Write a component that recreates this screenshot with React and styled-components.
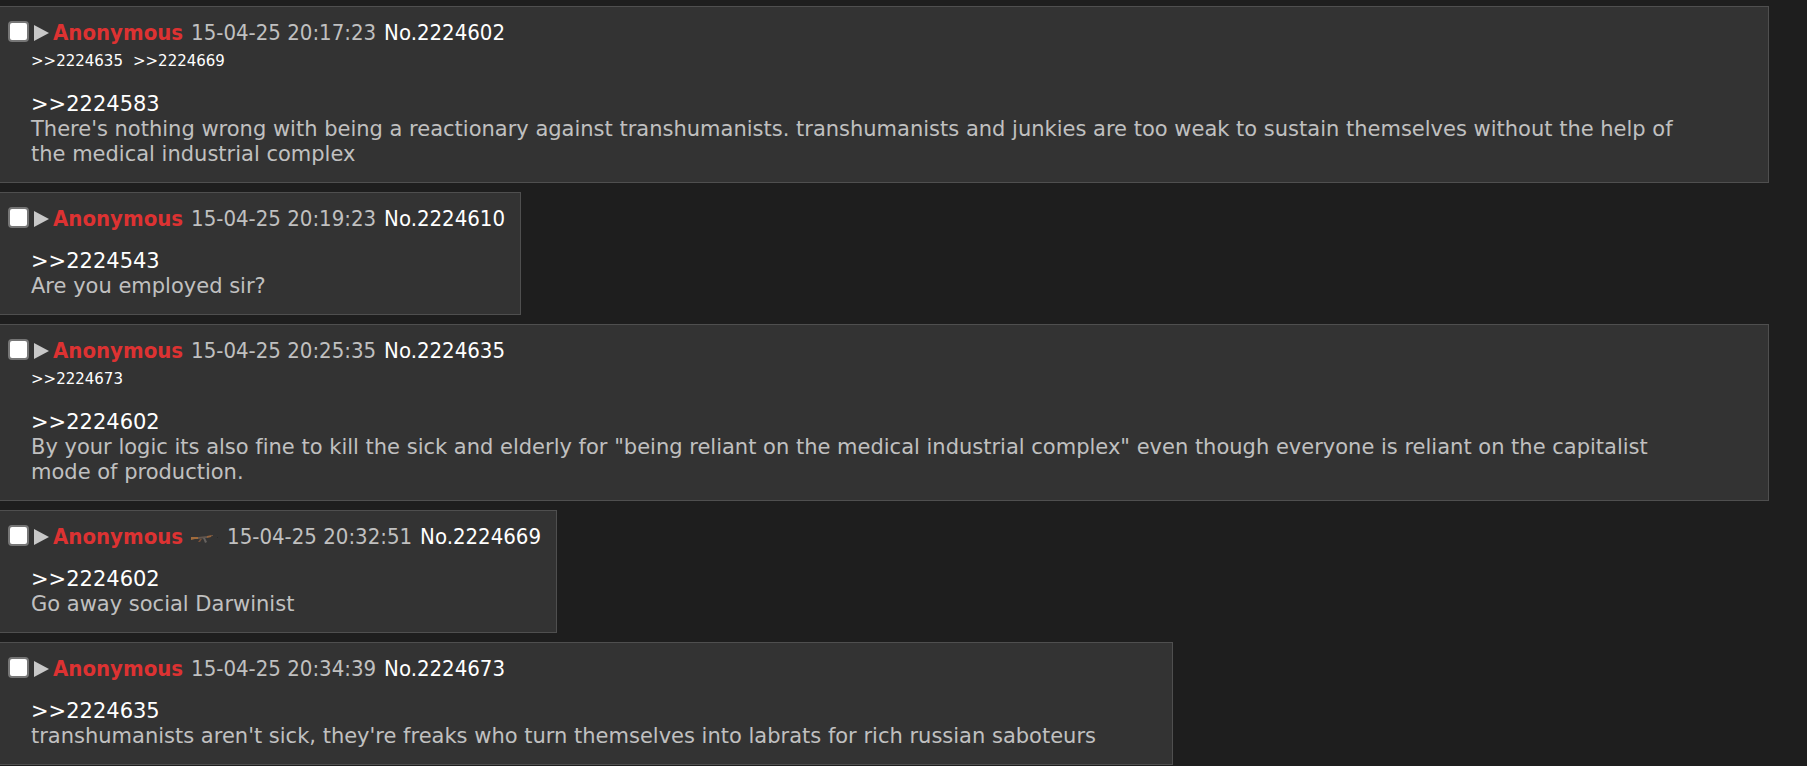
import styled, { createGlobalStyle } from 'styled-components';

const posts = [
    {
        id: '2224602',
        date: '15-04-25 20:17:23',
        replies: ['2224635', '2224669'],
        quote: '2224583',
        text: "There's nothing wrong with being a reactionary against transhumanists. transhumanists and junkies are too weak to sustain themselves without the help of the medical industrial complex"
    },
    {
        id: '2224610',
        date: '15-04-25 20:19:23',
        replies: [],
        quote: '2224543',
        text: 'Are you employed sir?'
    },
    {
        id: '2224635',
        date: '15-04-25 20:25:35',
        replies: ['2224673'],
        quote: '2224602',
        text: 'By your logic its also fine to kill the sick and elderly for "being reliant on the medical industrial complex" even though everyone is reliant on the capitalist mode of production.'
    },
    {
        id: '2224669',
        date: '15-04-25 20:32:51',
        replies: [],
        flag: true,
        quote: '2224602',
        text: 'Go away social Darwinist'
    },
    {
        id: '2224673',
        date: '15-04-25 20:34:39',
        replies: [],
        quote: '2224635',
        text: "transhumanists aren't sick, they're freaks who turn themselves into labrats for rich russian saboteurs"
    }
]

export default function App() {
    return (
        <>
            <GlobalStyle />
            <Thread>
                {posts.map((post) => <Post key={post.id} post={post} />)}
            </Thread>
        </>
    )
}

function Post({ post }) {
    return (
        <Container id={post.id}>
            <Header>
                <Check type="checkbox" id={`delete_${post.id}`} aria-label={`Select post ${post.id}`} />
                <Menu type="button" aria-label="Post menu">
                    <svg width="15" height="16" viewBox="0 0 15 16">
                        <path d="M0 0L15 8L0 16Z" fill="currentColor" />
                    </svg>
                </Menu>
                <Name htmlFor={`delete_${post.id}`}>Anonymous</Name>
                {post.flag && <Rifle />}
                <time>{post.date}</time>
                <PostLink href={`#${post.id}`}>No.{post.id}</PostLink>
            </Header>
            {post.replies.length > 0 &&
                <Replies>
                    {post.replies.map((reply) => <PostLink key={reply} href={`#${reply}`}>&gt;&gt;{reply}</PostLink>)}
                </Replies>
            }
            <Comment>
                <PostLink href={`#${post.quote}`}>&gt;&gt;{post.quote}</PostLink>
                <p>{post.text}</p>
            </Comment>
        </Container>
    )
}

function Rifle() {
    return (
        <Flag width="28" height="16" viewBox="0 0 28 16" aria-hidden="true">
            <path d="M0 8L7 8L7 10L4 10L0 11Z" fill="#a06b3c" />
            <path d="M7 8L16 7L16 9L7 10Z" fill="#62564e" />
            <path d="M9 10L11 10L9 13L7 13Z" fill="#75503a" />
            <path d="M12 9L14 9L16 13L14 14Z" fill="#66625f" />
            <path d="M16 7L21 6L20 8L16 9Z" fill="#94633c" />
            <path d="M21 6L22 6L22 7L21 7Z" fill="#66554a" />
            <path d="M26 8L27 8L27 9L26 9Z" fill="#292929" />
        </Flag>
    )
}

const GlobalStyle = createGlobalStyle`
    * {
        box-sizing: border-box;
    }
    body {
        margin: 0;
        background-color: #1e1e1e;
        color: #c0c0c0;
        font-family: 'DejaVu Sans', Verdana, sans-serif;
        font-size: 21px;
        line-height: 25px;
        font-variant-ligatures: none;
    }
    p {
        margin: 0;
    }
`
const Thread = styled.main`
    display: flex;
    flex-direction: column;
    align-items: flex-start;
    gap: 9px;
    padding: 6px 38px 1px 0;
`
const Container = styled.article`
    max-width: 100%;
    padding: 13px 15px 15px 8px;
    background-color: #333333;
    border: 1px solid #4f4f4f;
    border-left: none;
`
const Header = styled.header`
    display: flex;
    align-items: center;
    gap: 8px;
    font-family: 'DejaVu Sans Condensed', Tahoma, sans-serif;
    font-size: 22px;
    white-space: nowrap;
`
const Check = styled.input`
    appearance: none;
    width: 21px;
    height: 21px;
    margin: 0 -3px 2px 0;
    background-color: #ffffff;
    border: 2px solid #767676;
    border-radius: 4px;
    &:checked {
        background-color: #d93030;
    }
`
const Menu = styled.button`
    display: flex;
    margin: 0 -4px 0 0;
    padding: 0;
    border: none;
    background: none;
    color: #c8c8c8;
    cursor: pointer;
`
const Name = styled.label`
    color: #dd3232;
    font-weight: 700;
`
const Flag = styled.svg`
    flex: none;
`
const PostLink = styled.a`
    color: #ffffff;
    text-decoration: none;
`
const Replies = styled.div`
    display: flex;
    gap: 10px;
    margin-left: 23px;
    padding-top: 3px;
    font-size: 15px;
    line-height: 26px;
`
const Comment = styled.div`
    margin: 18px 61px 0 23px;
`
